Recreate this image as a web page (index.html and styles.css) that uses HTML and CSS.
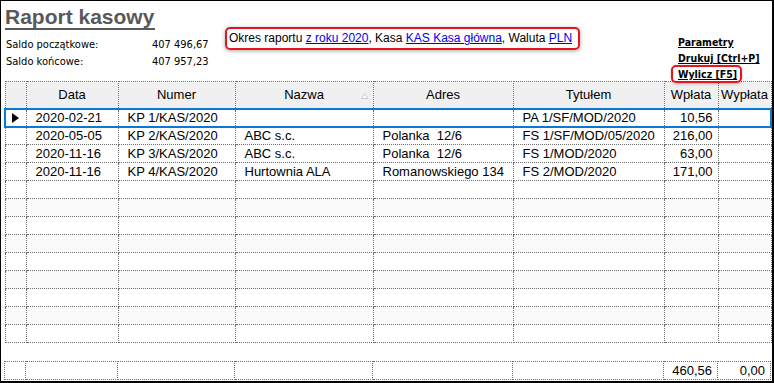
FILE: index.html
```html
<!DOCTYPE html>
<html lang="pl">
<head>
<meta charset="utf-8">
<link rel="stylesheet" href="styles.css">
</head>
<body>
<div class="window">
  <div class="top">
    <div class="left">
      <h1 class="title">Raport kasowy</h1>
      <div class="saldo"><span class="lbl">Saldo początkowe:</span><span>407 496,67</span></div>
      <div class="saldo"><span class="lbl">Saldo końcowe:</span><span>407 957,23</span></div>
    </div>
    <div class="center">
      <div class="okres">Okres raportu <a href="#">z roku 2020</a>, Kasa <a href="#">KAS Kasa główna</a>, Waluta <a href="#">PLN</a></div>
    </div>
    <div class="right">
      <a class="act" href="#">Parametry</a>
      <a class="act" href="#">Drukuj [Ctrl+P]</a>
      <a class="act hl" href="#">Wylicz [F5]</a>
    </div>
  </div>

  <table class="grid">
    <colgroup><col class="c0"><col class="c1"><col class="c2"><col class="c3"><col class="c4"><col class="c5"><col class="c6"><col class="c7"></colgroup>
    <thead>
      <tr>
        <th></th><th>Data</th><th>Numer</th>
        <th class="sort">Nazwa<svg class="tri" width="7" height="6" viewBox="0 0 7 6"><polygon points="3.5,0.5 6.5,5.5 0.5,5.5" fill="#fff" stroke="#c8c8c8" stroke-width="1"/></svg></th>
        <th>Adres</th><th>Tytułem</th><th>Wpłata</th><th>Wypłata</th>
      </tr>
    </thead>
    <tbody>
      <tr class="sel">
        <td class="ind"><svg width="7" height="10" viewBox="0 0 7 10"><polygon points="0,0 7,5 0,10" fill="#000"/></svg></td>
        <td>2020-02-21</td><td>KP 1/KAS/2020</td><td></td><td></td><td>PA 1/SF/MOD/2020</td><td class="num">10,56</td><td></td>
      </tr>
      <tr><td></td><td>2020-05-05</td><td>KP 2/KAS/2020</td><td>ABC s.c.</td><td>Polanka&nbsp; 12/6</td><td>FS 1/SF/MOD/05/2020</td><td class="num">216,00</td><td></td></tr>
      <tr><td></td><td>2020-11-16</td><td>KP 3/KAS/2020</td><td>ABC s.c.</td><td>Polanka&nbsp; 12/6</td><td>FS 1/MOD/2020</td><td class="num">63,00</td><td></td></tr>
      <tr><td></td><td>2020-11-16</td><td>KP 4/KAS/2020</td><td>Hurtownia ALA</td><td>Romanowskiego 134</td><td>FS 2/MOD/2020</td><td class="num">171,00</td><td></td></tr>
      <tr><td></td><td></td><td></td><td></td><td></td><td></td><td></td><td></td></tr>
      <tr class="alt"><td></td><td></td><td></td><td></td><td></td><td></td><td></td><td></td></tr>
      <tr><td></td><td></td><td></td><td></td><td></td><td></td><td></td><td></td></tr>
      <tr class="alt"><td></td><td></td><td></td><td></td><td></td><td></td><td></td><td></td></tr>
      <tr><td></td><td></td><td></td><td></td><td></td><td></td><td></td><td></td></tr>
      <tr class="alt"><td></td><td></td><td></td><td></td><td></td><td></td><td></td><td></td></tr>
      <tr><td></td><td></td><td></td><td></td><td></td><td></td><td></td><td></td></tr>
      <tr class="alt"><td></td><td></td><td></td><td></td><td></td><td></td><td></td><td></td></tr>
      <tr><td></td><td></td><td></td><td></td><td></td><td></td><td></td><td></td></tr>
    </tbody>
  </table>

  <table class="grid foot">
    <colgroup><col class="c0"><col class="c1"><col class="c2"><col class="c3"><col class="c4"><col class="c5"><col class="c6"><col class="c7"></colgroup>
    <tbody>
      <tr><td></td><td></td><td></td><td></td><td></td><td></td><td class="num">460,56</td><td class="num">0,00</td></tr>
    </tbody>
  </table>
</div>
</body>
</html>
```

FILE: styles.css
```css
* { box-sizing: border-box; }
html, body { margin: 0; padding: 0; background: #fff; }
.window {
  width: 774px;
  height: 383px;
  border-top: 1px solid #000;
  border-left: 1px solid #000;
  border-right: 2px solid #000;
  border-bottom: 2px solid #000;
  background: #fff;
  overflow: hidden;
  font-family: "Liberation Sans", Arial, sans-serif;
}
.top {
  display: flex;
  height: 80px;
}
.left {
  width: 224px;
  padding-left: 4px;
  font-family: "DejaVu Sans Condensed", "DejaVu Sans", sans-serif;
  font-size: 11px;
  color: #000;
}
.title {
  display: inline-block;
  margin: 5px 0 0 0;
  padding: 0 1px 1px 0;
  font-family: "Liberation Sans", Arial, sans-serif;
  font-weight: bold;
  font-size: 21px;
  line-height: 21px;
  color: #595959;
  border-bottom: 2px solid #595959;
}
.saldo {
  display: flex;
  height: 17px;
  line-height: 17px;
  padding-left: 1px;
}
.title + .saldo { margin-top: 6px; }
.lbl { width: 146px; }
.center { padding-top: 26px; }
.okres {
  width: 355px;
  height: 23px;
  border: 2px solid #e8141c;
  border-radius: 5px;
  box-shadow: 0 1px 4px rgba(0,0,0,0.35);
  padding: 0 0 0 2px;
  font-size: 12px;
  line-height: 19px;
  color: #000;
  white-space: nowrap;
}
.okres a { color: #0000ee; text-decoration: underline; }
.right {
  margin-left: auto;
  width: 94px;
  padding-top: 33px;
  display: flex;
  flex-direction: column;
  align-items: flex-start;
}
.act {
  font-family: "DejaVu Sans Condensed", "DejaVu Sans", sans-serif;
  font-weight: bold;
  font-size: 10.5px;
  line-height: 16px;
  color: #000;
  text-decoration: underline;
  white-space: nowrap;
}
.act.hl {
  margin-left: -7px;
  margin-top: -1px;
  border: 2px solid #e8141c;
  border-radius: 5px;
  padding: 0 3px 0 5px;
  line-height: 14px;
  box-shadow: 0 1px 3px rgba(0,0,0,0.25);
}
.grid {
  margin-left: 3px;
  width: 766px;
  border-collapse: collapse;
  table-layout: fixed;
  font-size: 13px;
  color: #000;
}
.c0 { width: 21px; }
.c1 { width: 92px; }
.c2 { width: 117px; }
.c3 { width: 138px; }
.c4 { width: 140px; }
.c5 { width: 151px; }
.c6 { width: 54px; }
.c7 { width: 53px; }
.grid th, .grid td {
  border: 1px dotted #6e6e6e;
  padding: 0 0 0 9px;
  white-space: nowrap;
  overflow: hidden;
}
.grid th {
  height: 27px;
  background: #f0f0f0;
  font-weight: normal;
  text-align: center;
  padding: 0;
}
.grid th.sort { position: relative; }
.tri { position: absolute; right: 5px; top: 11px; }
.grid td { height: 18px; line-height: 16px; }
.grid tr.alt td { background: #fafafa; }
.grid td.num { text-align: right; padding: 0 5px 0 0; }
.grid td.ind { padding: 0 0 0 6px; }
.grid td.ind svg { display: block; }
.grid tr.sel td {
  border-top: 2px solid #0a78d7;
  border-bottom: 2px solid #0a78d7;
}
.grid tr.sel td:first-child { border-left: 2px solid #0a78d7; }
.grid tr.sel td:last-child { border-right: 2px solid #0a78d7; }
.foot { margin-top: 18px; }
```
